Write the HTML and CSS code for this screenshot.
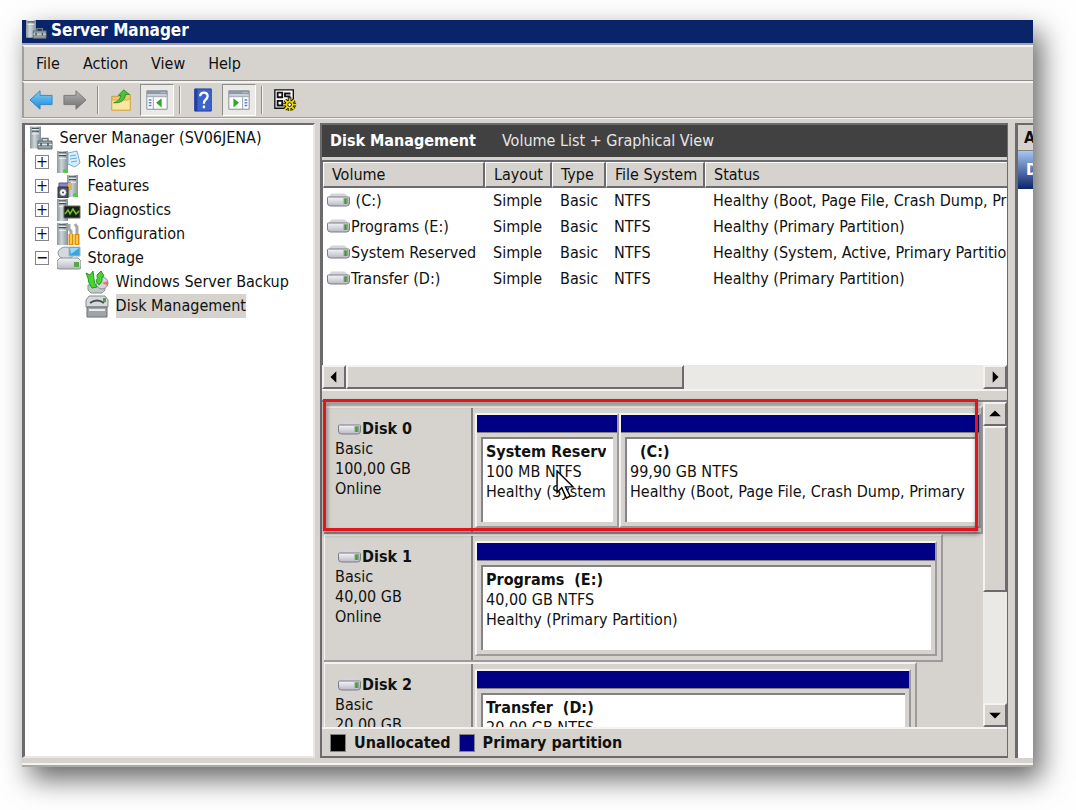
FILE: index.html
```html
<!DOCTYPE html>
<html lang="en">
<head>
    <meta charset="UTF-8">
    <meta name="viewport" content="width=device-width, initial-scale=1.0">
    <title>Server Manager</title>
    <link rel="stylesheet" href="styles.css">
</head>
<body>
    <!-- Shared icons -->
    <svg class="defs" width="0" height="0" aria-hidden="true">
        <defs>
            <linearGradient id="steel" x1="0" y1="0" x2="1" y2="0">
                <stop offset="0" stop-color="#8b979c"/>
                <stop offset="0.4" stop-color="#cdd5d8"/>
                <stop offset="1" stop-color="#84929a"/>
            </linearGradient>
            <linearGradient id="drive" x1="0" y1="0" x2="0" y2="1">
                <stop offset="0" stop-color="#f4f4f8"/>
                <stop offset="1" stop-color="#b9b9c6"/>
            </linearGradient>
            <linearGradient id="blueArrow" x1="0" y1="0" x2="0" y2="1">
                <stop offset="0" stop-color="#7fd0fa"/>
                <stop offset="1" stop-color="#1b86d6"/>
            </linearGradient>
            <linearGradient id="grayArrow" x1="0" y1="0" x2="0" y2="1">
                <stop offset="0" stop-color="#b4b4b4"/>
                <stop offset="1" stop-color="#6e6e6e"/>
            </linearGradient>
            <symbol id="i-disk" viewBox="0 0 24 14">
                <path d="M5 0.500H18L23 5H1Z" fill="#d4d4d9"/>
                <path d="M1 4.500Q1 4 2 4H22Q23 4 23 4.500V10Q23 13 20 13H4Q1 13 1 10Z" fill="url(#drive)" stroke="#7d7d86"/>
                <path d="M17 5H22V11H17Z" fill="#8fa58c"/>
                <path d="M18 6H20V11H18Z" fill="#3f9a3c"/>
            </symbol>
            <symbol id="i-tower" viewBox="0 0 12 24">
                <path d="M0 0H12V24H0Z" fill="url(#steel)"/>
                <path d="M2 2H10M2 5H10" stroke="#44525a" stroke-width="1.500"/>
                <path d="M2 3.500H10M2 8H10" stroke="#f1f5f6"/>
            </symbol>
            <symbol id="i-server" viewBox="0 0 24 24">
                <use href="#i-tower" x="1" y="0" width="11" height="23"/>
                <path d="M9 15H23V23H9Z" fill="#94a0a6" stroke="#5d6a70"/>
                <path d="M13 15V12.500H19V15" fill="none" stroke="#6d7a80" stroke-width="1.500"/>
                <path d="M9 18.500H23" stroke="#dfe5e8"/>
                <path d="M12 17V20M19 17V20" stroke="#48545a" stroke-width="1.500"/>
            </symbol>
        </defs>
    </svg>

    <div class="window">
        <header class="title-bar">
            <svg class="title-icon" viewBox="0 4 24 20"><use href="#i-server" width="24" height="24"/></svg>
            <h1>Server Manager</h1>
        </header>

        <nav class="menu-bar">
            <button type="button">File</button>
            <button type="button">Action</button>
            <button type="button">View</button>
            <button type="button">Help</button>
        </nav>

        <div class="toolbar">
            <button type="button" class="tool" aria-label="Back">
                <svg viewBox="0 0 26 26"><path d="M1 13L12 3V8H25V18H12V23Z" fill="url(#blueArrow)" stroke="#2a86c4"/></svg>
            </button>
            <button type="button" class="tool" aria-label="Forward">
                <svg viewBox="0 0 26 26"><path d="M25 13L14 3V8H1V18H14V23Z" fill="url(#grayArrow)" stroke="#777"/></svg>
            </button>
            <span class="divider"></span>
            <button type="button" class="tool" aria-label="Up one level">
                <svg viewBox="0 0 26 26">
                    <path d="M3 9H11L13 7H23V24H3Z" fill="#eec96b" stroke="#c39a3a"/>
                    <path d="M3 24V13H21L23 11V24Z" fill="#fbe5a0" stroke="#d1a94b"/>
                    <path d="M5 16Q12 14 13 8H10L16 2L22 7H18Q17 17 5 16Z" fill="#4cc23a" stroke="#2b8f25"/>
                </svg>
            </button>
            <button type="button" class="tool pressed" aria-label="Show or hide console tree">
                <svg viewBox="0 0 26 26">
                    <path d="M2 3H24V23H2Z" fill="#fff" stroke="#7a8596"/>
                    <path d="M2 3H24V7H2Z" fill="#8e99a8"/>
                    <path d="M17 5H23" stroke="#dfe4ea" stroke-dasharray="1 1"/>
                    <path d="M2 9H24" stroke="#a9b2be" stroke-width="2"/>
                    <path d="M9 10V23" stroke="#8e99a8"/>
                    <path d="M4 13H7M4 16H7M4 19H7" stroke="#5a80c0" stroke-width="1.500"/>
                    <path d="M12 16L18 11V21Z" fill="#2fa52c"/>
                </svg>
            </button>
            <span class="divider"></span>
            <button type="button" class="tool" aria-label="Help">
                <svg viewBox="0 0 26 26">
                    <path d="M4 1H22V25H4Z" fill="#3a63cf" stroke="#24409a"/>
                    <path d="M4 1H7V25H4Z" fill="#24409a"/>
                    <path d="M10 9Q10 5 14 5Q18 5 18 9Q18 11 15.500 13Q14 14 14 17M14 19V22" fill="none" stroke="#fff" stroke-width="2.500"/>
                </svg>
            </button>
            <button type="button" class="tool pressed" aria-label="Show or hide action pane">
                <svg viewBox="0 0 26 26">
                    <path d="M2 3H24V23H2Z" fill="#fff" stroke="#7a8596"/>
                    <path d="M2 3H24V7H2Z" fill="#8e99a8"/>
                    <path d="M17 5H23" stroke="#dfe4ea" stroke-dasharray="1 1"/>
                    <path d="M2 9H24" stroke="#a9b2be" stroke-width="2"/>
                    <path d="M17 10V23" stroke="#8e99a8"/>
                    <path d="M19 13H22M19 16H22M19 19H22" stroke="#5a80c0" stroke-width="1.500"/>
                    <path d="M13 16L7 11V21Z" fill="#2fa52c"/>
                </svg>
            </button>
            <span class="divider"></span>
            <button type="button" class="tool" aria-label="Settings">
                <svg viewBox="0 0 26 26">
                    <path d="M2 2H22V22H2Z" fill="#fff" stroke="#111" stroke-width="1.500"/>
                    <path d="M5 5H10V10H5ZM5 14H10V19H5Z" fill="none" stroke="#111" stroke-width="2"/>
                    <path d="M13 5V10M13 6H19M13 9H19" stroke="#111" stroke-width="2"/>
                    <path d="M18 10V25M11 18H25M13 13L23 23M23 13L13 23" stroke="#111" stroke-width="4"/>
                    <path d="M18 11V25M11 18H25M13 13L23 23M23 13L13 23" stroke="#e8d800" stroke-width="2"/>
                    <circle cx="18" cy="18" r="4" fill="#e8d800"/>
                    <circle cx="18" cy="18" r="2" fill="#fff" stroke="#111"/>
                </svg>
            </button>
        </div>

        <div class="content">
            <!-- Console tree -->
            <aside class="tree">
                <ul>
                    <li class="root">
                        <svg class="icon" viewBox="0 0 24 24"><use href="#i-server"/></svg>
                        <span>Server Manager (SV06JENA)</span>
                    </li>
                    <li>
                        <button type="button" class="toggle" aria-label="Expand">+</button>
                        <svg class="icon" viewBox="0 0 24 24">
                            <use href="#i-tower" x="0" y="0" width="11" height="24"/>
                            <circle cx="8" cy="21" r="2" fill="#4bd02c"/>
                            <path d="M11 3L20 1L23 13L18 17L11 14Z" fill="#d8effb" stroke="#74aed6"/>
                            <path d="M13 6L19 5M13 9L20 8M14 12L20 11" stroke="#6ba8d8"/>
                        </svg>
                        <span>Roles</span>
                    </li>
                    <li>
                        <button type="button" class="toggle" aria-label="Expand">+</button>
                        <svg class="icon" viewBox="0 0 24 24">
                            <use href="#i-tower" x="10" y="0" width="11" height="24"/>
                            <circle cx="18" cy="21" r="2" fill="#4bd02c"/>
                            <path d="M2 9H14V14H2Z" fill="#8d83c9" stroke="#5c5695"/>
                            <path d="M11 9H15V16H11Z" fill="#e1b54d"/>
                            <path d="M1 13H11V24H1Z" fill="#4e555c" stroke="#2a2e33"/>
                            <circle cx="6" cy="18.500" r="3" fill="#fff" stroke="#c5cbd0"/>
                            <circle cx="6" cy="18.500" r="1" fill="#444"/>
                        </svg>
                        <span>Features</span>
                    </li>
                    <li>
                        <button type="button" class="toggle" aria-label="Expand">+</button>
                        <svg class="icon" viewBox="0 0 24 24">
                            <use href="#i-tower" x="0" y="0" width="11" height="24"/>
                            <path d="M7 8H23V20H7Z" fill="#172017" stroke="#666"/>
                            <path d="M8 16L11 12L13 16L16 11L19 16L22 13" fill="none" stroke="#6fc02d" stroke-width="1.500"/>
                        </svg>
                        <span>Diagnostics</span>
                    </li>
                    <li>
                        <button type="button" class="toggle" aria-label="Expand">+</button>
                        <svg class="icon" viewBox="0 0 24 24">
                            <use href="#i-tower" x="0" y="0" width="11" height="24"/>
                            <path d="M12 2V7L14 9V14M18 2L20 5V12" fill="none" stroke="#a4a9ad" stroke-width="3"/>
                            <path d="M14 12V23M20 12V23" stroke="#d98d08" stroke-width="5"/>
                            <path d="M14 12V22M20 13V22" stroke="#ffc93a" stroke-width="2"/>
                        </svg>
                        <span>Configuration</span>
                    </li>
                    <li>
                        <button type="button" class="toggle" aria-label="Collapse">−</button>
                        <svg class="icon" viewBox="0 0 24 24">
                            <ellipse cx="9" cy="7" rx="8" ry="6" fill="#d5dadd" stroke="#929a9f"/>
                            <path d="M12 1H23V10H12Z" fill="#39a5dc" stroke="#9fb6c2"/>
                            <path d="M13 2H22L14 8Z" fill="#9bd8f5"/>
                            <path d="M3 12H21L24 15V21Q24 23 22 23H2Q0 23 0 21V15Z" fill="url(#drive)" stroke="#888e92"/>
                            <path d="M17 16H22V21H17Z" fill="#58a845"/>
                        </svg>
                        <span>Storage</span>
                        <ul>
                            <li>
                                <svg class="icon" viewBox="0 0 24 24">
                                    <path d="M3 15H20V20L17 23H6L3 20Z" fill="#c3c8cb" stroke="#8b9195"/>
                                    <circle cx="17" cy="13" r="6" fill="#d5d2df" stroke="#8f8d9a"/>
                                    <path d="M17 13L23 11V16Z" fill="#e27c5a"/>
                                    <path d="M1 3L5 5L8 1L9 9Q9 14 12 17L7 18Q3 13 3 8Z" fill="#48d433" stroke="#1f9e1c"/>
                                    <path d="M12 5L16 1L19 6L17 7Q18 12 14 15L11 11Q13 9 12 5Z" fill="#48d433" stroke="#1f9e1c"/>
                                </svg>
                                <span>Windows Server Backup</span>
                            </li>
                            <li>
                                <svg class="icon" viewBox="0 0 24 24">
                                    <path d="M4 2H20L23 6V13H1V6Z" fill="#d5d9db" stroke="#858b8f"/>
                                    <path d="M5 9Q12 4 19 9" fill="none" stroke="#4a4f52" stroke-width="2"/>
                                    <path d="M18 4H21V8H18Z" fill="#4aa33d"/>
                                    <path d="M2 13H22V23H2Z" fill="#9ea4a7" stroke="#6b7174"/>
                                    <path d="M4 16H20" stroke="#e7eaec" stroke-width="2"/>
                                </svg>
                                <span class="selected">Disk Management</span>
                            </li>
                        </ul>
                    </li>
                </ul>
            </aside>

            <!-- Disk management -->
            <main class="main-pane">
                <div class="pane-title">
                    <h2>Disk Management</h2>
                    <p>Volume List + Graphical View</p>
                </div>

                <div class="volume-list">
                    <table>
                        <colgroup>
                            <col class="col-volume">
                            <col class="col-layout">
                            <col class="col-type">
                            <col class="col-fs">
                            <col class="col-status">
                        </colgroup>
                        <thead>
                            <tr><th>Volume</th><th>Layout</th><th>Type</th><th>File System</th><th>Status</th></tr>
                        </thead>
                        <tbody>
                            <tr><td><svg class="disk-icon"><use href="#i-disk"/></svg>&nbsp;(C:)</td><td>Simple</td><td>Basic</td><td>NTFS</td><td>Healthy (Boot, Page File, Crash Dump, Primary Partition)</td></tr>
                            <tr><td><svg class="disk-icon"><use href="#i-disk"/></svg>Programs (E:)</td><td>Simple</td><td>Basic</td><td>NTFS</td><td>Healthy (Primary Partition)</td></tr>
                            <tr><td><svg class="disk-icon"><use href="#i-disk"/></svg>System Reserved</td><td>Simple</td><td>Basic</td><td>NTFS</td><td>Healthy (System, Active, Primary Partition)</td></tr>
                            <tr><td><svg class="disk-icon"><use href="#i-disk"/></svg>Transfer (D:)</td><td>Simple</td><td>Basic</td><td>NTFS</td><td>Healthy (Primary Partition)</td></tr>
                        </tbody>
                    </table>
                </div>
                <div class="scrollbar horizontal">
                    <button type="button" aria-label="Scroll left"><svg viewBox="0 0 12 12"><path d="M8 1V11L3 6Z"/></svg></button>
                    <div class="track"><div class="thumb"></div></div>
                    <button type="button" aria-label="Scroll right"><svg viewBox="0 0 12 12"><path d="M4 1V11L9 6Z"/></svg></button>
                </div>

                <div class="splitter"></div>

                <div class="graph">
                    <div class="disks">
                        <section class="disk disk-0">
                            <div class="disk-label">
                                <h3><svg class="disk-icon"><use href="#i-disk"/></svg>Disk 0</h3>
                                <p>Basic</p>
                                <p>100,00 GB</p>
                                <p>Online</p>
                            </div>
                            <div class="partitions">
                                <div class="partition reserved">
                                    <div class="bar"></div>
                                    <div class="info">
                                        <h4>System Reserved</h4>
                                        <p>100 MB NTFS</p>
                                        <p>Healthy (System, Active)</p>
                                    </div>
                                </div>
                                <div class="partition">
                                    <div class="bar"></div>
                                    <div class="info">
                                        <h4>&nbsp; (C:)</h4>
                                        <p>99,90 GB NTFS</p>
                                        <p>Healthy (Boot, Page File, Crash Dump, Primary</p>
                                    </div>
                                </div>
                            </div>
                        </section>
                        <section class="disk disk-1">
                            <div class="disk-label">
                                <h3><svg class="disk-icon"><use href="#i-disk"/></svg>Disk 1</h3>
                                <p>Basic</p>
                                <p>40,00 GB</p>
                                <p>Online</p>
                            </div>
                            <div class="partitions">
                                <div class="partition">
                                    <div class="bar"></div>
                                    <div class="info">
                                        <h4>Programs&nbsp; (E:)</h4>
                                        <p>40,00 GB NTFS</p>
                                        <p>Healthy (Primary Partition)</p>
                                    </div>
                                </div>
                            </div>
                        </section>
                        <section class="disk disk-2">
                            <div class="disk-label">
                                <h3><svg class="disk-icon"><use href="#i-disk"/></svg>Disk 2</h3>
                                <p>Basic</p>
                                <p>20,00 GB</p>
                            </div>
                            <div class="partitions">
                                <div class="partition">
                                    <div class="bar"></div>
                                    <div class="info">
                                        <h4>Transfer&nbsp; (D:)</h4>
                                        <p>20,00 GB NTFS</p>
                                    </div>
                                </div>
                            </div>
                        </section>
                    </div>
                    <div class="scrollbar vertical">
                        <button type="button" aria-label="Scroll up"><svg viewBox="0 0 12 12"><path d="M1 8H11L6 3Z"/></svg></button>
                        <div class="track"><div class="thumb"></div></div>
                        <button type="button" aria-label="Scroll down"><svg viewBox="0 0 12 12"><path d="M1 4H11L6 9Z"/></svg></button>
                    </div>
                    <div class="highlight"></div>
                    <svg class="cursor" viewBox="0 0 20 32"><path d="M1 1V24L6 19L11 30L15 28L10 18H18Z" fill="#fff" stroke="#000" stroke-width="1.500"/></svg>
                </div>

                <div class="legend">
                    <span class="swatch unallocated"></span><span>Unallocated</span>
                    <span class="swatch primary"></span><span>Primary partition</span>
                </div>
            </main>

            <!-- Actions pane -->
            <aside class="actions">
                <h2>A</h2>
                <h3>D</h3>
            </aside>
        </div>
    </div>
</body>
</html>
```
FILE: styles.css
```css
* {
    box-sizing: border-box;
}
body {
    margin: 0;
    padding: 20px 43px 43px 22px;
    height: 100vh;
    background-color: #fefefe;
    font-family: "DejaVu Sans Condensed", "DejaVu Sans", sans-serif;
    font-size: 16px;
    line-height: 20px;
    color: #111;
    overflow: hidden;
}
h1, h2, h3, h4, p, ul {
    margin: 0;
    padding: 0;
    font-size: 16px;
}
ul {
    list-style: none;
}
button {
    font: inherit;
    color: inherit;
    padding: 0;
    border: none;
    background: none;
}
.defs {
    position: absolute;
}
.window {
    height: 100%;
    display: flex;
    flex-direction: column;
    background-color: #d6d3ce;
    border-bottom: 2px solid #aaa8a5;
    box-shadow: 8px 12px 26px rgba(0, 0, 0, 0.6);
}

/* Title, menu and toolbar */
.title-bar {
    height: 25px;
    display: flex;
    align-items: flex-start;
    gap: 4px;
    padding-left: 3px;
    background-color: #0a246a;
    border-bottom: 2px solid #a5a4ae;
    color: #fff;
}
.title-bar h1 {
    font-size: 17px;
}
.title-icon {
    width: 22px;
    height: 20px;
}
.menu-bar {
    height: 36px;
    display: flex;
    align-items: center;
    gap: 23px;
    padding-left: 12px;
    border-top: 2px solid #f4f3f1;
    border-left: 2px solid #a09e9b;
    border-bottom: 1px solid #8f8d8a;
}
.toolbar {
    height: 37px;
    display: flex;
    align-items: center;
    gap: 2px;
    padding-left: 2px;
    border-top: 2px solid #f4f3f1;
    border-left: 2px solid #a09e9b;
    border-bottom: 1px solid #a09e9b;
}
.tool {
    width: 34px;
    height: 32px;
    display: flex;
    align-items: center;
    justify-content: center;
    flex: none;
}
.tool svg {
    width: 26px;
    height: 24px;
}
.tool:first-child {
    width: 30px;
}
.tool.pressed {
    background-color: #ebe9e6;
    border: 1px solid #fff;
    border-top-color: #8f8d8a;
    border-left-color: #8f8d8a;
}
.divider {
    width: 2px;
    height: 28px;
    margin: 0 3px;
    border-left: 1px solid #8f8d8a;
    border-right: 1px solid #f4f3f1;
}

/* Panes */
.content {
    flex: 1;
    min-height: 0;
    display: flex;
    gap: 5px;
    padding: 4px 0 5px;
    border-top: 1px solid #f4f3f1;
    border-bottom: 2px solid #f4f3f1;
}
.tree {
    width: 293px;
    flex: none;
    padding: 1px 0 0 4px;
    background-color: #fff;
    border: 2px solid #e9e7e3;
    border-top-color: #6c6a6c;
    border-left: 3px solid #6c6a6c;
    white-space: nowrap;
}
.tree li {
    padding-left: 28px;
    line-height: 24px;
    position: relative;
}
.tree li.root,
.tree li li {
    padding-left: 0;
}
.tree li ul {
    padding-left: 28px;
}
.icon {
    width: 24px;
    height: 24px;
    margin-right: 2px;
    vertical-align: top;
}
.toggle {
    position: absolute;
    left: 6px;
    top: 5px;
    width: 14px;
    height: 14px;
    border: 1px solid #848284;
    line-height: 12px;
    background-color: #fff;
}
.tree span {
    display: inline-block;
}
.tree .selected {
    background-color: #d6d3ce;
}
.main-pane {
    flex: 1;
    min-width: 0;
    margin-right: 2px;
    display: flex;
    flex-direction: column;
    border: 2px solid #6c6a6c;
    border-right: 1px solid #6c6a6c;
}
.pane-title {
    height: 32px;
    flex: none;
    display: flex;
    align-items: center;
    gap: 26px;
    padding-left: 8px;
    background-color: #424142;
    color: #fff;
}
.pane-title p {
    color: #e6e6e6;
}

/* Volume list */
.volume-list {
    height: 205px;
    flex: none;
    margin-top: 3px;
    border-top: 2px solid #6c6a6c;
    border-left: 1px solid #6c6a6c;
    background-color: #fff;
    overflow: hidden;
}
table {
    width: 100%;
    table-layout: fixed;
    border-collapse: separate;
    border-spacing: 0;
}
.col-volume { width: 162px; }
.col-layout { width: 67px; }
.col-type { width: 54px; }
.col-fs { width: 99px; }
th {
    height: 26px;
    padding: 0 0 0 8px;
    text-align: left;
    font-weight: normal;
    background-color: #d6d3ce;
    border: 2px solid #6c6a6c;
    border-top: 1px solid #fff;
    border-left: 1px solid #fff;
    white-space: nowrap;
}
th:last-child {
    border-right: none;
}
td {
    height: 26px;
    padding: 0 0 0 8px;
    white-space: nowrap;
    overflow: hidden;
}
td:first-child {
    padding-left: 3px;
}
.disk-icon {
    width: 25px;
    height: 14px;
    vertical-align: -1px;
}

/* Scrollbars */
.scrollbar {
    flex: none;
    display: flex;
    background-color: #ebe9e6;
}
.scrollbar button,
.thumb {
    background-color: #d6d3ce;
    border: 2px solid #6c6a6c;
    border-top-color: #f4f3f1;
    border-left-color: #f4f3f1;
}
.scrollbar button {
    width: 24px;
    height: 24px;
    flex: none;
    display: flex;
    align-items: center;
    justify-content: center;
}
.scrollbar svg {
    width: 14px;
    height: 14px;
}
.track {
    flex: 1;
}
.horizontal .thumb {
    width: 53%;
    height: 24px;
}
.vertical {
    width: 24px;
    flex-direction: column;
}
.vertical .thumb {
    width: 24px;
    height: 60%;
}
.splitter {
    height: 13px;
    flex: none;
    border-top: 2px solid #f4f3f1;
    border-bottom: 2px solid #848284;
}

/* Graphical view */
.graph {
    flex: 1;
    min-height: 0;
    display: flex;
    position: relative;
}
.disks {
    flex: 1;
    min-width: 0;
    padding: 4px 0 0 2px;
    overflow: hidden;
}
.disk {
    height: 128px;
    display: flex;
    border-top: 2px solid #f4f3f1;
    border-right: 2px solid #9c9a9c;
    border-bottom: 2px solid #9c9a9c;
}
.disk-0 { width: 100%; }
.disk-1 { width: 94%; }
.disk-2 { width: 90%; }
.disk-label {
    width: 149px;
    flex: none;
    padding: 11px 0 0 10px;
    border-left: 1px solid #f4f3f1;
    border-right: 2px solid #848284;
}
.disk-label h3 {
    padding-left: 2px;
}
.partitions {
    flex: 1;
    min-width: 0;
    display: flex;
    padding: 5px 4px 4px 2px;
}
.disk-0 .partitions {
    padding-right: 0;
}
.partition {
    flex: 1;
    min-width: 0;
    display: flex;
    flex-direction: column;
    border: 2px solid #9c9a9c;
    border-top-color: #f4f3f1;
    border-left-color: #f4f3f1;
}
.partition.reserved {
    flex: 0 0 144px;
}
.bar {
    height: 18px;
    background-color: #000084;
    border-bottom: 1px solid #848284;
}
.info {
    flex: 1;
    margin: 4px;
    padding: 3px 7px 0 3px;
    background-color: #fff;
    border-top: 2px solid #848284;
    border-left: 2px solid #848284;
    white-space: nowrap;
    overflow: hidden;
}
.info h4,
.info p {
    overflow: hidden;
}
.highlight {
    position: absolute;
    left: 1px;
    top: -3px;
    width: calc(100% - 30px);
    height: 132px;
    border: 3px solid #e4141c;
    filter: drop-shadow(1px 3px 2px rgba(0, 0, 0, 0.5));
}
.cursor {
    position: absolute;
    left: 234px;
    top: 68px;
    width: 19px;
    height: 30px;
}
.legend {
    height: 29px;
    flex: none;
    display: flex;
    align-items: center;
    gap: 8px;
    padding-left: 8px;
    border-top: 2px solid #f4f3f1;
    font-weight: bold;
}
.swatch {
    width: 16px;
    height: 18px;
    border: 1px solid #848284;
}
.unallocated { background-color: #000; }
.primary { background-color: #000084; }

/* Actions pane */
.actions {
    width: 18px;
    flex: none;
    background-color: #fff;
    border-top: 2px solid #6c6a6c;
    border-left: 3px solid #6c6a6c;
    overflow: hidden;
}
.actions h2 {
    height: 26px;
    padding: 3px 0 0 6px;
    background-color: #d6d3ce;
    border-bottom: 1px solid #848284;
}
.actions h3 {
    height: 38px;
    padding: 9px 0 0 8px;
    background: linear-gradient(#a5c7f3, #0a246a);
    color: #fff;
}
```
